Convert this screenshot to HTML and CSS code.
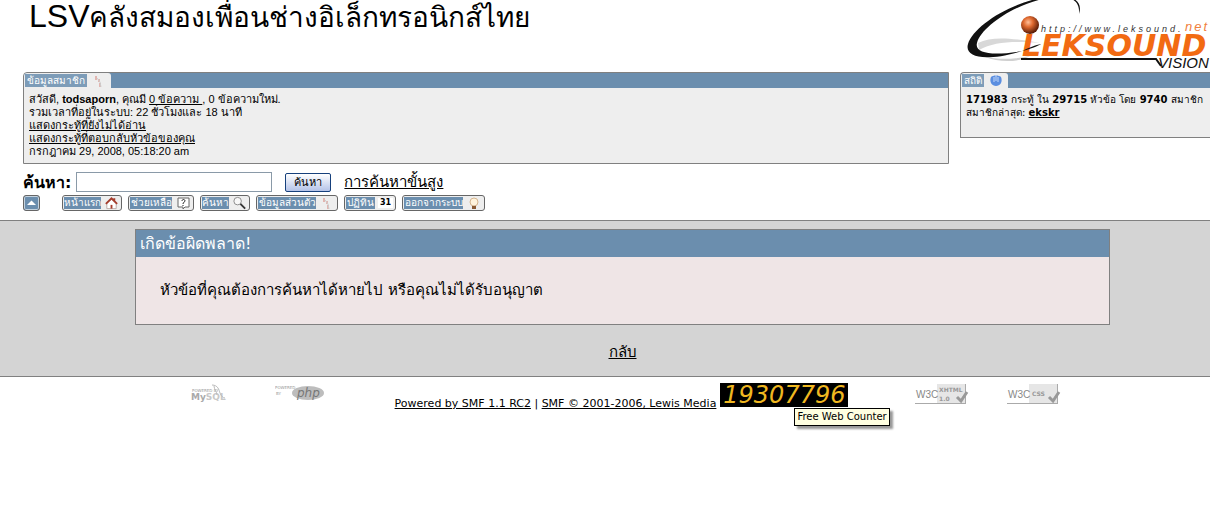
FILE: index.html
```html
<!DOCTYPE html>
<html lang="th">
<head>
    <meta charset="UTF-8">
    <meta name="viewport" content="width=device-width, initial-scale=1.0">
    <title>เกิดข้อผิดพลาด!</title>
    <link rel="stylesheet" href="styles.css">
</head>
<body>
    <header class="header">
        <h1 class="site-title"><span>LSV</span>คลังสมองเพื่อนช่างอิเล็กทรอนิกส์ไทย</h1>
        <svg class="logo" width="250" height="72" viewBox="0 0 250 72" role="img" aria-label="Leksound Vision">
            <defs>
                <radialGradient id="ball" cx="0.4" cy="0.35" r="0.65">
                    <stop offset="0" stop-color="#ffc09a"/>
                    <stop offset="0.4" stop-color="#e06a30"/>
                    <stop offset="1" stop-color="#541804"/>
                </radialGradient>
            </defs>
            <path d="M18 43 C32 36 52 38 80 43 C52 41 34 42 19 50 Z" fill="#d8d8d8"/>
            <path d="M25 57 C40 60 55 59 70 56 C60 62 40 63 25 57 Z" fill="#d0d0d0"/>
            <path d="M119 14 C123 2 114 -4 100 -4 C60 -4 14 24 8 44 C4 58 26 62 62 51 C34 56 14 54 17 43 C22 24 66 -3 100 -3 C113 -3 120 2 119 14 Z" fill="#111"/>
            <circle cx="70" cy="25" r="9" fill="url(#ball)"/>
            <text x="81" y="32" class="logo-url">http://www.leksound.</text>
            <text x="225" y="31" class="logo-net">net</text>
            <text x="62" y="56" class="logo-name">LEKSOUND</text>
            <path d="M62 51 C74 48 80 45 81 44 C76 45 68 48 62 51 Z" fill="#111"/>
            <path d="M61 59 H196 L201 66" fill="none" stroke="#111" stroke-width="2"/>
            <text x="198" y="68" class="logo-vision">VISION</text>
        </svg>
    </header>

    <div class="panels">
        <section class="panel user-panel">
            <div class="panel-bar">
                <h2 class="tab"><span class="tab-label">ข้อมูลสมาชิก</span>
                    <svg width="16" height="14" viewBox="0 0 16 14"><path d="M5 2v4M8 5v3M9 9v4" stroke="#e2b5b0" stroke-width="2"/><path d="M6 4l3 4 1 5" stroke="#ccc" fill="none"/></svg>
                </h2>
            </div>
            <div class="panel-body">
                สวัสดี, <b>todsaporn</b>, คุณมี <a href="#">0 ข้อความ </a>, 0 ข้อความใหม่.<br>
                รวมเวลาที่อยู่ในระบบ: 22 ชั่วโมงและ 18 นาที<br>
                <a href="#">แสดงกระทู้ที่ยังไม่ได้อ่าน</a><br>
                <a href="#">แสดงกระทู้ที่ตอบกลับหัวข้อของคุณ</a><br>
                กรกฎาคม 29, 2008, 05:18:20 am
            </div>
        </section>
        <section class="panel stats-panel">
            <div class="panel-bar">
                <h2 class="tab"><span class="tab-label">สถิติ</span>
                    <svg width="16" height="14" viewBox="0 0 16 14"><path d="M3 3 C5 1 11 1 13 3 C15 8 12 12 8 12 C4 12 1 8 3 3Z" fill="#5b8ee0"/><path d="M8 1v6M6 3v5M10 3v5" stroke="#c4d8f8"/></svg>
                </h2>
            </div>
            <div class="panel-body">
                <b>171983</b> กระทู้ ใน <b>29715</b> หัวข้อ โดย <b>9740</b> สมาชิก<br>
                สมาชิกล่าสุด: <a href="#"><b>ekskr</b></a>
            </div>
        </section>
    </div>

    <form class="search">
        <label for="search">ค้นหา:</label>
        <input type="text" id="search" name="search">
        <button type="button">ค้นหา</button>
        <a href="#">การค้นหาขั้นสูง</a>
    </form>

    <nav class="menu">
        <a class="collapse" href="#" aria-label="ย่อ"><svg width="11" height="10" viewBox="0 0 11 10"><path d="M1 7L5.500 2.500L10 7Z" fill="#fff"/></svg></a>
        <a class="menu-item home" href="#"><span>หน้าแรก</span>
            <svg width="16" height="14" viewBox="0 0 16 14"><path d="M3 7v6h10V7L8 3Z" fill="#fff" stroke="#b9a9a4"/><path d="M2 8L8 2L14 8M11 2v3" fill="none" stroke="#a53c2c" stroke-width="2"/><path d="M7 9h2v4H7z" fill="#a53c2c"/></svg></a>
        <a class="menu-item help" href="#"><span>ช่วยเหลือ</span>
            <svg width="16" height="14" viewBox="0 0 16 14"><path d="M3 2h11v9h-4l-2 2v-2H3z" fill="#fff" stroke="#666"/><path d="M7 5c0-2 3-2 3 0 0 1-2 1-2 3M8 9v1" fill="none" stroke="#222"/></svg></a>
        <a class="menu-item find" href="#"><span>ค้นหา</span>
            <svg width="16" height="14" viewBox="0 0 16 14"><circle cx="6" cy="5" r="4" fill="#f8f8f8" stroke="#888"/><path d="M9 8l5 5" stroke="#333" stroke-width="2"/></svg></a>
        <a class="menu-item profile" href="#"><span>ข้อมูลส่วนตัว</span>
            <svg width="16" height="14" viewBox="0 0 16 14"><path d="M5 2v4M8 5v3M9 9v4" stroke="#e2b5b0" stroke-width="2"/><path d="M6 4l3 4 1 5" stroke="#ccc" fill="none"/></svg></a>
        <a class="menu-item calendar" href="#"><span>ปฏิทิน</span><b>31</b></a>
        <a class="menu-item logout" href="#"><span>ออกจากระบบ</span>
            <svg width="16" height="14" viewBox="0 0 16 14"><circle cx="8" cy="6" r="4" fill="#fff3dc" stroke="#d5b590"/><path d="M6 10h4v3H6z" fill="#8a5a34"/></svg></a>
    </nav>

    <main class="content">
        <section class="error">
            <h2>เกิดข้อผิดพลาด!</h2>
            <p>หัวข้อที่คุณต้องการค้นหาได้หายไป หรือคุณไม่ได้รับอนุญาต</p>
        </section>
        <a class="back" href="#">กลับ</a>
    </main>

    <footer class="footer">
        <div class="badges">
            <a href="#" aria-label="MySQL">
                <svg width="36" height="20" viewBox="0 0 36 20"><text x="1" y="9" class="badge-tiny">POWERED BY</text><text x="0" y="17" class="badge-mysql">My<tspan fill="#c8c8c8">SQL</tspan></text><path d="M21 2c6 0 7 5 8 8 1 3 3 5 5 5M23 3c0 3 3 6 3 9" fill="none" stroke="#bbb"/></svg>
            </a>
            <a href="#" aria-label="PHP">
                <svg width="50" height="20" viewBox="0 0 50 20"><text x="0" y="6" class="badge-tiny">POWERED</text><text x="1" y="12" class="badge-tiny">BY</text><ellipse cx="33" cy="10" rx="16" ry="7" fill="#bdbdbd"/><text x="22" y="14" class="badge-php">php</text></svg>
            </a>
        </div>
        <div class="copyright">
            <a href="#">Powered by SMF 1.1 RC2</a> | <a href="#">SMF © 2001-2006, Lewis Media</a>
        </div>
        <div class="counter">
            <a href="#">19307796</a>
            <span class="tooltip">Free Web Counter</span>
        </div>
        <div class="badges valid">
            <a href="#" aria-label="Valid XHTML 1.0">
                <svg width="54" height="22" viewBox="0 0 54 22"><path d="M0 1h51v20H0z" fill="#aaa"/><path d="M0 1h50v19H0z" fill="#fff"/><path d="M22 1h28v19H22z" fill="#e6e6e6"/><text x="1" y="15" class="badge-w3c">W3C</text><text x="24" y="9" class="badge-std">XHTML</text><text x="24" y="18" class="badge-std">1.0</text><path d="M42 14l4 4 6-9" fill="none" stroke="#999" stroke-width="3"/></svg>
            </a>
            <a href="#" aria-label="Valid CSS">
                <svg width="54" height="22" viewBox="0 0 54 22"><path d="M0 1h51v20H0z" fill="#aaa"/><path d="M0 1h50v19H0z" fill="#fff"/><path d="M22 1h28v19H22z" fill="#e6e6e6"/><text x="1" y="15" class="badge-w3c">W3C</text><text x="25" y="13" class="badge-std">CSS</text><path d="M42 14l4 4 6-9" fill="none" stroke="#999" stroke-width="3"/></svg>
            </a>
        </div>
    </footer>
</body>
</html>
```
FILE: styles.css
```css
* {
    margin: 0;
    padding: 0;
    box-sizing: border-box;
}

body {
    min-height: 100vh;
    background: #fff;
    color: #000;
    font-family: "DejaVu Sans", "Noto Sans", sans-serif;
    font-size: 15px;
}

a {
    color: #000;
}

.header {
    display: flex;
    justify-content: space-between;
    height: 72px;
    padding-left: 29px;
}

.site-title {
    font-family: "Liberation Sans", sans-serif;
    font-size: 28px;
    font-weight: normal;
    line-height: 32px;
    white-space: nowrap;
}

.site-title span {
    font-size: 32px;
}

.logo {
    flex: none;
    font-family: "Liberation Sans", sans-serif;
}

.logo-url {
    font-size: 9px;
    font-style: italic;
    letter-spacing: 3px;
    fill: #333;
}

.logo-net {
    font-size: 13px;
    font-style: italic;
    letter-spacing: 2px;
    fill: #f08040;
}

.logo-name {
    font-family: "DejaVu Sans", sans-serif;
    font-size: 30px;
    font-weight: bold;
    font-style: italic;
    fill: #f26a12;
}

.logo-vision {
    font-size: 15px;
    font-style: italic;
    fill: #111;
}

/* info panels */
.panels {
    display: grid;
    grid-template-columns: 926fr 250fr;
    gap: 11px;
    align-items: start;
    padding-left: 23px;
}

.panel {
    background: #eee;
    border: 1px solid #808080;
    border-radius: 4px 0 0 0;
    overflow: hidden;
}

.stats-panel {
    border-right: none;
}

.panel-bar {
    height: 15px;
    background: #6b8eae;
}

.tab {
    display: inline-flex;
    align-items: center;
    gap: 4px;
    height: 15px;
    padding: 0 4px 0 1px;
    background: #eee;
    border-radius: 3px 3px 0 0;
    font-size: 10px;
    font-weight: normal;
    vertical-align: top;
}

.tab-label {
    height: 13px;
    padding: 0 2px;
    background: #7d9cb8;
    color: #fff;
    line-height: 13px;
}

.panel-body {
    padding: 5px;
    font-size: 11px;
    line-height: 13px;
    white-space: nowrap;
}

.user-panel .panel-body {
    min-height: 75px;
    font-family: "Liberation Sans", sans-serif;
}

.stats-panel .panel-body {
    min-height: 49px;
    font-size: 10px;
}

/* search row */
.search {
    display: flex;
    align-items: center;
    height: 20px;
    margin-top: 8px;
    padding-left: 23px;
}

.search label {
    margin-right: 5px;
    font-size: 16px;
    font-weight: bold;
}

.search input {
    width: 196px;
    height: 20px;
    border: 1px solid #8a9aa8;
}

.search button {
    width: 46px;
    height: 19px;
    margin: 0 13px;
    border: 1px solid #16407c;
    border-radius: 2px;
    background: linear-gradient(#fff, #b4c3e8);
    font-size: 11px;
    line-height: 15px;
}

/* main menu */
.menu {
    display: flex;
    gap: 6px;
    margin: 3px 0 9px;
    padding-left: 23px;
}

.collapse,
.menu-item {
    display: flex;
    align-items: center;
    height: 16px;
    border: 1px solid #666;
    border-radius: 3px;
    background: #eee;
    text-decoration: none;
}

.collapse {
    justify-content: center;
    width: 17px;
    margin-right: 16px;
    background: #6b8eae;
    box-shadow: inset 0 0 0 1px #c4d2de;
}

.menu-item {
    justify-content: space-between;
    padding: 0 2px 0 1px;
    font-size: 10px;
}

.menu-item span {
    flex: 1;
    height: 12px;
    margin-right: 3px;
    background: #6b8eae;
    color: #fff;
    line-height: 12px;
    text-align: center;
    white-space: nowrap;
}

.menu-item b {
    width: 15px;
    background: #fff;
    font-size: 8px;
    line-height: 10px;
    text-align: center;
}

.home {
    width: 60px;
}

.help {
    width: 66px;
}

.find {
    width: 50px;
}

.profile {
    width: 82px;
}

.calendar {
    width: 52px;
}

.logout {
    width: 83px;
}

/* error message */
.content {
    padding: 8px 100px 14px 135px;
    background: #d4d4d4;
    border: solid #808080;
    border-width: 1px 0;
    text-align: center;
}

.error {
    margin-bottom: 17px;
    background: #efe5e6;
    border: 1px solid #808080;
    text-align: left;
}

.error h2 {
    padding: 0 4px;
    background: #6b8eae;
    color: #fff;
    font-size: 16px;
    font-weight: normal;
    line-height: 27px;
}

.error p {
    padding: 24px;
    line-height: 19px;
}

.back {
    display: inline-block;
    line-height: 20px;
}

/* footer */
.footer {
    display: flex;
    align-items: flex-start;
    justify-content: center;
    padding: 6px 0 0 42px;
}

.badges {
    display: flex;
    gap: 48px;
    margin-right: 70px;
}

.badges a {
    height: 22px;
}

.valid {
    gap: 38px;
    margin: 0 0 0 67px;
}

.badge-tiny {
    font-size: 4px;
    fill: #999;
}

.badge-mysql {
    font-size: 9px;
    font-weight: bold;
    fill: #aaa;
}

.badge-php {
    font-size: 12px;
    font-style: italic;
    fill: #777;
}

.badge-w3c {
    font-family: "Liberation Sans", sans-serif;
    font-size: 10px;
    fill: #888;
}

.badge-std {
    font-size: 6px;
    font-weight: bold;
    fill: #999;
}

.copyright {
    padding-top: 14px;
    font-size: 11px;
    line-height: 14px;
    white-space: nowrap;
}

.counter {
    position: relative;
    margin-left: 4px;
}

.counter > a {
    display: block;
    width: 128px;
    background: #000;
    color: #f0b820;
    font-size: 24px;
    font-style: italic;
    line-height: 24px;
    text-align: center;
    text-decoration: none;
}

.tooltip {
    position: absolute;
    top: 25px;
    left: 74px;
    padding: 1px 2px;
    border: 1px solid #000;
    background: #ffffe1;
    box-shadow: 3px 3px 2px #999;
    font-size: 10px;
    line-height: 14px;
    white-space: nowrap;
}
```
